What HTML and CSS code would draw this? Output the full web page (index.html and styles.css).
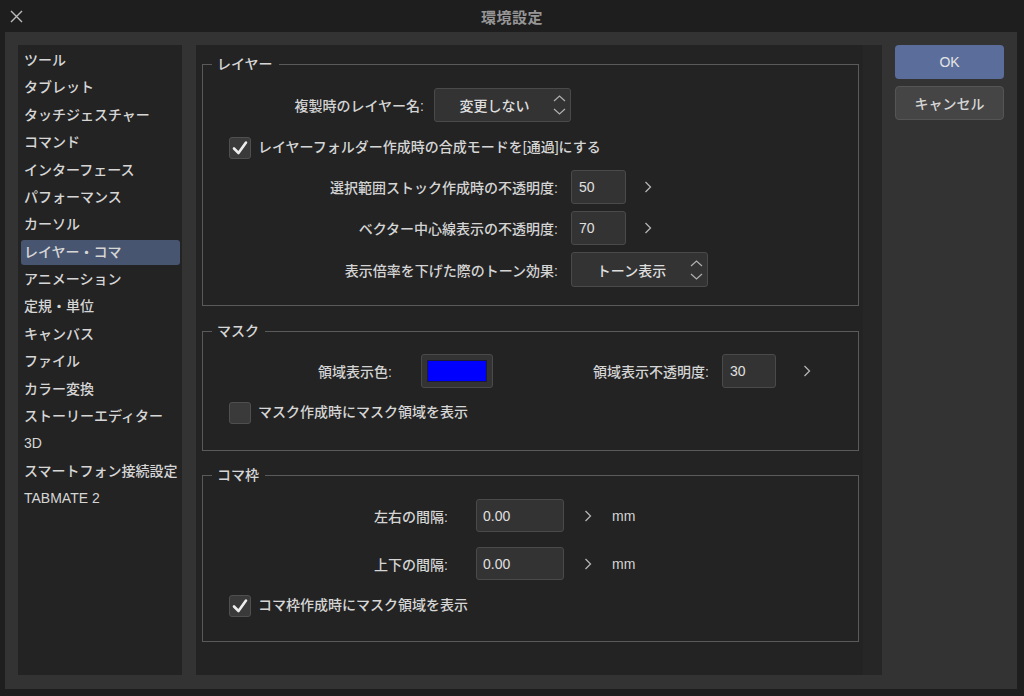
FILE: index.html
```html
<!DOCTYPE html>
<html lang="ja">
<head>
<meta charset="utf-8">
<title>環境設定</title>
<link rel="stylesheet" href="styles.css">
</head>
<body>
<div class="titlebar">
  <div class="close">
    <svg width="13" height="13" viewBox="0 0 13 13"><path d="M1 1 L12 12 M12 1 L1 12" stroke="#bdbdbd" stroke-width="1.4" fill="none"/></svg>
  </div>
  <div class="title">環境設定</div>
  <div></div>
</div>
<div class="frame">
  <ul class="cats">
    <li>ツール</li>
    <li>タブレット</li>
    <li>タッチジェスチャー</li>
    <li>コマンド</li>
    <li>インターフェース</li>
    <li>パフォーマンス</li>
    <li>カーソル</li>
    <li class="sel">レイヤー・コマ</li>
    <li>アニメーション</li>
    <li>定規・単位</li>
    <li>キャンバス</li>
    <li>ファイル</li>
    <li>カラー変換</li>
    <li>ストーリーエディター</li>
    <li>3D</li>
    <li>スマートフォン接続設定</li>
    <li>TABMATE 2</li>
  </ul>
  <div class="main">
    <div class="content">
      <fieldset class="grp g-layer">
        <legend>レイヤー</legend>
        <div class="row">
          <span class="lbl w-name">複製時のレイヤー名:</span>
          <div class="select s-name"><span class="sv">変更しない</span>
            <svg class="spin" width="13" height="20" viewBox="0 0 13 20"><path d="M1 6 L6.5 1 L12 6 M1 14 L6.5 19 L12 14" stroke="#b0b0b0" stroke-width="1.2" fill="none"/></svg>
          </div>
        </div>
        <div class="check c-folder"><span class="box"><svg width="22" height="22" viewBox="0 0 22 22"><path d="M5 11.5 L9.5 16 L17 5.5" stroke="#ededed" stroke-width="2.6" fill="none" stroke-linecap="round" stroke-linejoin="round"/></svg></span><span class="ct">レイヤーフォルダー作成時の合成モードを[通過]にする</span></div>
        <div class="row r-op1">
          <span class="lbl w-op">選択範囲ストック作成時の不透明度:</span>
          <div class="input i-op">50</div>
          <svg class="arrow a-op" width="8" height="12" viewBox="0 0 8 12"><path d="M1.5 1 L6.5 6 L1.5 11" stroke="#b5b5b5" stroke-width="1.3" fill="none"/></svg>
        </div>
        <div class="row r-op2">
          <span class="lbl w-op">ベクター中心線表示の不透明度:</span>
          <div class="input i-op">70</div>
          <svg class="arrow a-op" width="8" height="12" viewBox="0 0 8 12"><path d="M1.5 1 L6.5 6 L1.5 11" stroke="#b5b5b5" stroke-width="1.3" fill="none"/></svg>
        </div>
        <div class="row r-op2 tall">
          <span class="lbl w-op">表示倍率を下げた際のトーン効果:</span>
          <div class="select s-tone"><span class="sv">トーン表示</span>
            <svg class="spin" width="13" height="20" viewBox="0 0 13 20"><path d="M1 6 L6.5 1 L12 6 M1 14 L6.5 19 L12 14" stroke="#b0b0b0" stroke-width="1.2" fill="none"/></svg>
          </div>
        </div>
      </fieldset>

      <fieldset class="grp g-mask">
        <legend>マスク</legend>
        <div class="row">
          <span class="lbl w-color">領域表示色:</span>
          <div class="swatch"><span class="blue"></span></div>
          <span class="lbl w-mop">領域表示不透明度:</span>
          <div class="input i-mop">30</div>
          <svg class="arrow a-mop" width="8" height="12" viewBox="0 0 8 12"><path d="M1.5 1 L6.5 6 L1.5 11" stroke="#b5b5b5" stroke-width="1.3" fill="none"/></svg>
        </div>
        <div class="check c-mask"><span class="box"></span><span class="ct">マスク作成時にマスク領域を表示</span></div>
      </fieldset>

      <fieldset class="grp g-koma">
        <legend>コマ枠</legend>
        <div class="row r-k">
          <span class="lbl w-k">左右の間隔:</span>
          <div class="input i-k">0.00</div>
          <svg class="arrow a-k" width="8" height="12" viewBox="0 0 8 12"><path d="M1.5 1 L6.5 6 L1.5 11" stroke="#b5b5b5" stroke-width="1.3" fill="none"/></svg>
          <span class="unit">mm</span>
        </div>
        <div class="row r-k r-k2">
          <span class="lbl w-k">上下の間隔:</span>
          <div class="input i-k">0.00</div>
          <svg class="arrow a-k" width="8" height="12" viewBox="0 0 8 12"><path d="M1.5 1 L6.5 6 L1.5 11" stroke="#b5b5b5" stroke-width="1.3" fill="none"/></svg>
          <span class="unit">mm</span>
        </div>
        <div class="check c-koma"><span class="box"><svg width="22" height="22" viewBox="0 0 22 22"><path d="M5 11.5 L9.5 16 L17 5.5" stroke="#ededed" stroke-width="2.6" fill="none" stroke-linecap="round" stroke-linejoin="round"/></svg></span><span class="ct">コマ枠作成時にマスク領域を表示</span></div>
      </fieldset>
    </div>
    <div class="strip"></div>
  </div>
  <div class="buttons">
    <div class="btn ok">OK</div>
    <div class="btn cancel">キャンセル</div>
  </div>
</div>
</body>
</html>
```

FILE: styles.css
```css
html, body {
  margin: 0;
  padding: 0;
}
body {
  width: 1024px;
  height: 696px;
  overflow: hidden;
  background: #1e1e1e;
  font-family: "Liberation Sans", "Noto Sans CJK JP", sans-serif;
  font-size: 14px;
  font-weight: 500;
  color: #d4d4d4;
}

.titlebar {
  height: 32px;
  display: grid;
  grid-template-columns: 1fr auto 1fr;
  align-items: center;
}
.close {
  display: flex;
  padding-left: 10px;
  padding-top: 1px;
}
.title {
  font-size: 15px;
  font-weight: bold;
  color: #969696;
  letter-spacing: 0.5px;
}

.frame {
  display: flex;
  margin: 0 7px 0 5px;
  height: 657px;
  box-sizing: border-box;
  padding: 13px 13px 14px 13px;
  background: #333333;
}

.cats {
  width: 164px;
  box-sizing: border-box;
  margin: 0;
  padding: 3px 2px 0 3px;
  list-style: none;
  background: #232323;
}
.cats li {
  height: 25px;
  line-height: 25px;
  padding-left: 3px;
  margin-bottom: 2.375px;
  border-radius: 3px;
  color: #d6d6d6;
  white-space: nowrap;
}
.cats li.sel {
  background: #485570;
}

.main {
  width: 686px;
  margin-left: 14px;
  background: #232323;
  display: flex;
}
.content {
  width: 667px;
  box-sizing: border-box;
  padding: 9px 0 0 6px;
}
.strip {
  width: 19px;
  background: #262626;
}

.buttons {
  width: 109px;
  margin-left: 13px;
  display: flex;
  flex-direction: column;
  gap: 7px;
}
.btn {
  height: 34px;
  box-sizing: border-box;
  border-radius: 4px;
  display: flex;
  align-items: center;
  justify-content: center;
  color: #e4e4e4;
}
.btn.ok {
  background: #5b6e9b;
}
.btn.cancel {
  background: #454545;
  border: 1px solid #555555;
  color: #d6d6d6;
}

.grp {
  width: 657px;
  box-sizing: border-box;
  margin: 0;
  min-inline-size: 0;
  border: 1px solid #5a5a5a;
}
.grp legend {
  margin-left: 9px;
  padding: 0 6px 0 5px;
  line-height: 20px;
  color: #d6d6d6;
}
.g-layer {
  padding: 14px 0 18px 0;
}
.g-mask {
  margin-top: 15px;
  padding: 13px 0 26px 0;
}
.g-koma {
  margin-top: 14px;
  padding: 14px 0 24px 0;
}

.row {
  display: flex;
  align-items: center;
  height: 34px;
}
.row.tall {
  height: 35px;
}
.r-op1 {
  margin-top: 11px;
}
.r-op2 {
  margin-top: 7px;
}
.r-k {
  height: 33px;
}
.r-k2 {
  margin-top: 15px;
}

.lbl {
  text-align: right;
  white-space: nowrap;
  flex: none;
}
.w-name { width: 221px; margin-right: 10px; }
.w-op { width: 355px; margin-right: 13px; }
.w-color { width: 189px; margin-right: 29px; }
.w-mop { width: 216px; margin-right: 13px; }
.w-k { width: 245px; margin-right: 28px; }

.select, .input, .swatch {
  box-sizing: border-box;
  height: 100%;
  background: #333333;
  border: 1px solid #4a4a4a;
  border-radius: 3px;
  flex: none;
}
.select {
  display: flex;
  align-items: center;
  position: relative;
  color: #dedede;
}
.select .sv {
  flex: 1;
  text-align: center;
  padding-right: 18px;
  padding-left: 2px;
}
.select .spin {
  position: absolute;
  right: 4px;
  top: 50%;
  margin-top: -10px;
}
.s-name { width: 137px; }
.s-tone { width: 137px; }

.input {
  display: flex;
  align-items: center;
  padding-left: 7px;
  color: #e0e0e0;
}
.i-op { width: 55px; }
.i-mop { width: 54px; }
.i-k { width: 88px; padding-left: 6px; }

.arrow { flex: none; }
.a-op { margin-left: 18px; }
.a-mop { margin-left: 27px; }
.a-k { margin-left: 20px; }
.unit {
  margin-left: 20px;
  color: #d4d4d4;
}

.swatch {
  width: 72px;
  padding: 5px 5px;
  display: flex;
}
.swatch .blue {
  flex: 1;
  background: #0000ff;
  border: 1px solid #1c1c3a;
}

.check {
  display: flex;
  align-items: center;
  height: 22px;
  margin-left: 26px;
  white-space: nowrap;
  color: #d6d6d6;
}
.check .ct {
  line-height: 20px;
  margin-top: -2px;
}
.check .box {
  width: 22px;
  height: 22px;
  box-sizing: border-box;
  background: #3a3a3a;
  border: 1px solid #4f4f4f;
  border-radius: 3px;
  margin-right: 7px;
  display: flex;
  align-items: center;
  justify-content: center;
  flex: none;
}
.check .box svg {
  margin: -1px;
}
.c-folder { margin-top: 15px; }
.c-mask { margin-top: 14px; }
.c-koma { margin-top: 15px; }
```
